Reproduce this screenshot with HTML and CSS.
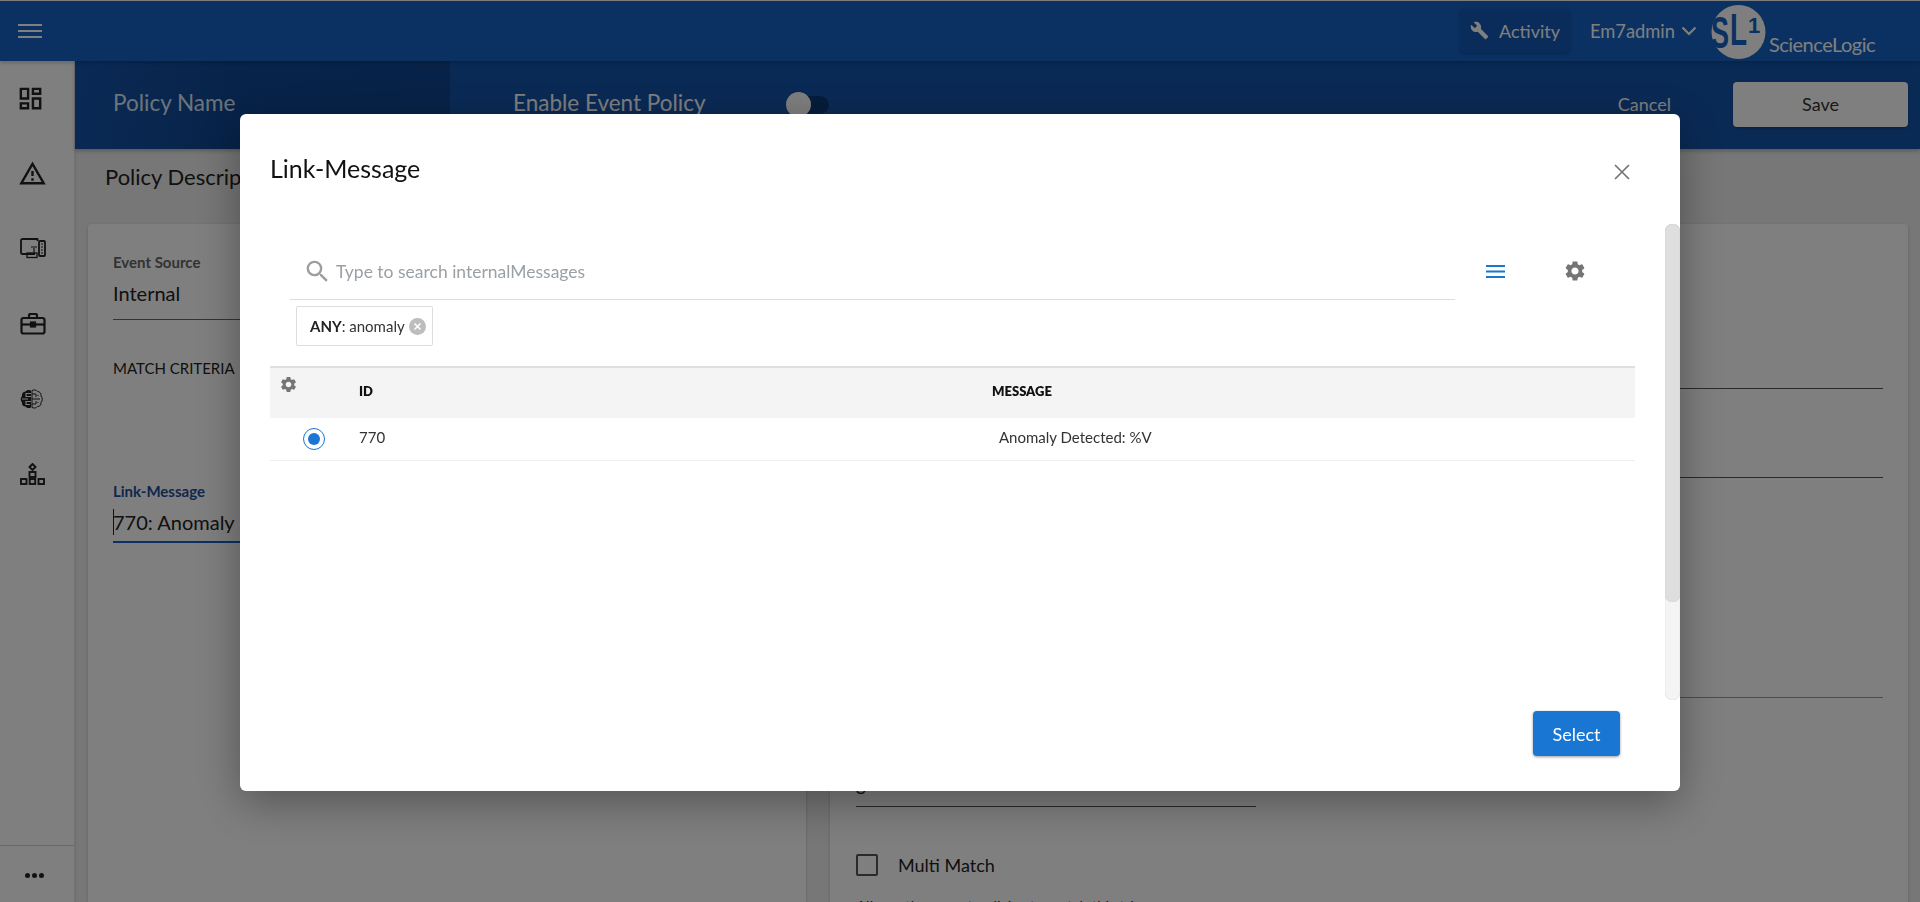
FILE: index.html
```html
<!DOCTYPE html>
<html lang="en">
<head>
<meta charset="utf-8">
<title>Policy Editor</title>
<link rel="stylesheet" href="styles.css">
</head>
<body>
<div class="app">
  <header class="topbar">
    <button class="icon-btn menu-btn" aria-label="Menu"><svg width="24" height="24" viewBox="0 0 24 24"><path d="M0 5h24v2H0zM0 11h24v2H0zM0 17h24v2H0z" fill="#fff"/></svg></button>
    <div class="topbar-right">
      <div class="activity">
        <svg width="19" height="19" viewBox="0 0 24 24"><path fill="#fff" d="M22.7 19l-9.1-9.1c.9-2.3.4-5-1.5-6.9-2-2-5-2.4-7.4-1.3L9 6 6 9 1.6 4.7C.4 7.1.9 10.1 2.9 12.1c1.9 1.9 4.6 2.4 6.9 1.5l9.1 9.1c.4.4 1 .4 1.4 0l2.3-2.3c.5-.4.5-1.1.1-1.4z"/></svg>
        <span>Activity</span>
      </div>
      <div class="user"><span>Em7admin</span>
        <svg width="16" height="10" viewBox="0 0 16 10"><path d="M1.5 1.5L8 8l6.500-6.500" fill="none" stroke="#fff" stroke-width="2.200"/></svg>
      </div>
      <div class="logo">
        <svg width="56" height="56" viewBox="0 0 56 56" class="logo-mark">
          <circle cx="27.500" cy="28" r="27" fill="#fff"/>
          <text x="0" y="44" textLength="18" lengthAdjust="spacingAndGlyphs" class="logo-s">S</text>
          <text x="19" y="41" textLength="17" lengthAdjust="spacingAndGlyphs" class="logo-l">L</text>
          <text x="37" y="29" class="logo-one">1</text>
        </svg>
        <span class="logo-text">ScienceLogic</span>
      </div>
    </div>
  </header>
  <div class="main">
    <nav class="sidebar">
      <a class="nav-item"><svg width="29" height="29" viewBox="0 0 24 24"><path class="ico" d="M19 5v2h-4V5h4M9 5v6H5V5h4m10 8v6h-4v-6h4M9 17v2H5v-2h4M21 3h-8v6h8V3zM11 3H3v10h8V3zm10 8h-8v10h8V11zm-10 4H3v6h8v-6z"/></svg></a>
      <a class="nav-item nav-item-warn"><svg width="29" height="29" viewBox="0 0 24 24"><path class="ico" d="M12 5.990L19.530 19H4.470L12 5.990M12 2L1 21h22L12 2zm1 14h-2v2h2v-2zm0-6h-2v4h2v-4z"/></svg></a>
      <a class="nav-item nav-item-in"><svg width="26" height="21" viewBox="0 0 26 21" fill="none" stroke="#222" stroke-width="1.800"><path d="M15 16H2.500A1.500 1.500 0 0 1 1 14.500V2.500A1.500 1.500 0 0 1 2.500 1H17.500V3"/><rect x="19" y="3" width="6" height="15" rx="1"/><path d="M21 6h2M21 9h2M21 12h2M21 15h2" stroke-width="1.200"/><rect x="7" y="15" width="10" height="4.500" stroke-width="1.300"/><path d="M14 15v-5M11 9h6" stroke-width="1.200"/></svg></a>
      <a class="nav-item nav-item-in"><svg width="26" height="22" viewBox="0 0 26 22" fill="none" stroke="#222" stroke-width="2.200"><path d="M9 5V2.500A1.500 1.500 0 0 1 10.500 1h5A1.500 1.500 0 0 1 17 2.500V5"/><rect x="1.500" y="5" width="23" height="15.500" rx="2"/><path d="M1.500 11.500h23"/><rect x="11" y="9.500" width="4" height="4" fill="#222"/></svg></a>
      <a class="nav-item nav-item-in"><svg width="23" height="20" viewBox="0 0 23 20"><path fill="#222" d="M11 1.500V18.500C8.500 19.500 6.500 19 5.500 17.500 3 17.500 1.500 15.500 2 13.500.3 12 .3 8.500 2 7 1.500 4.500 3 2.800 5.500 2.500 6.500 .8 9 .5 11 1.500z"/><path d="M12 1.500C14 .5 16.500.8 17.500 2.500 20 2.800 21.500 4.500 21 7 22.700 8.500 22.700 12 21 13.500 21.500 15.500 20 17.500 17.500 17.500 16.500 19 14.500 19.500 12 18.500zM12 5h4v3M12 10h8M12 15h4v-3M18 6v1M18 13v1" fill="none" stroke="#222" stroke-width="1"/><path d="M11 4.500H6v3h5M2 10h6M11 12.500H6v3h4" fill="none" stroke="#fff" stroke-width="1.100"/></svg></a>
      <a class="nav-item nav-item-in"><svg width="25" height="22" viewBox="0 0 25 22" fill="none" stroke="#222" stroke-width="1.900"><path d="M12.500 1l3 3-3 3-3-3z"/><rect x="9.500" y="9" width="6" height="5"/><rect x="1" y="16" width="5.500" height="5"/><rect x="9.700" y="16" width="5.500" height="5"/><rect x="18.500" y="16" width="5.500" height="5"/></svg></a>
      <div class="nav-more"><span class="dots"><i></i><i></i><i></i></span></div>
    </nav>
    <div class="content">
      <div class="subheader">
        <div class="policy-name">Policy Name</div>
        <div class="enable-label">Enable Event Policy</div>
        <div class="toggle"><span class="knob"></span></div>
        <div class="cancel">Cancel</div>
        <div class="save">Save</div>
      </div>
      <div class="desc-row">Policy Description</div>
      <div class="cards">
        <section class="card card-left">
          <div class="field-label">Event Source</div>
          <div class="field-value field-line">Internal</div>
          <div class="section-label">MATCH CRITERIA</div>
          <div class="field-label field-label-active">Link-Message</div>
          <div class="field-value field-line-active"><span class="caret"></span>770: Anomaly Detected: %V</div>
        </section>
        <section class="card card-right">
          <div class="line-one"></div>
          <div class="line-two"></div>
          <div class="line-three"></div>
          <div class="line-four"><span>g</span></div>
          <div class="check-row"><span class="checkbox"></span><span>Multi Match</span></div>
          <p class="hint">Allow other event policies to match this trigger</p>
        </section>
      </div>
    </div>
  </div>
</div>

<div class="backdrop"></div>
<div class="modal">
  <div class="modal-head">
    <h2 class="modal-title">Link-Message</h2>
    <svg class="close" width="16" height="16" viewBox="0 0 16 16"><path d="M1 1l14 14M15 1L1 15" stroke="#757575" stroke-width="1.700" fill="none"/></svg>
  </div>
  <div class="modal-body">
    <div class="toolbar">
      <div class="search">
        <svg width="29" height="29" viewBox="0 0 24 24"><path fill="#9e9e9e" d="M15.500 14h-.79l-.28-.27A6.471 6.471 0 0 0 16 9.500 6.500 6.500 0 1 0 9.500 16c1.610 0 3.090-.59 4.230-1.570l.27.28v.79l5 4.990L20.490 19l-4.990-5zm-6 0C7.010 14 5 11.990 5 9.500S7.010 5 9.500 5 14 7.010 14 9.500 11.990 14 9.500 14z"/></svg>
        <span class="placeholder">Type to search internalMessages</span>
      </div>
      <svg class="burger" width="19" height="13" viewBox="0 0 19 13"><path d="M0 0h19v2H0zM0 5.500h19v2H0zM0 11h19v2H0z" fill="#1976d2"/></svg>
      <svg class="gear" width="24" height="24" viewBox="0 0 24 24"><path fill="#757575" d="M19.140 12.940c.04-.3.060-.61.060-.94 0-.32-.02-.64-.07-.94l2.030-1.580c.18-.14.230-.41.120-.61l-1.920-3.320c-.12-.22-.37-.29-.59-.22l-2.390.960c-.5-.38-1.030-.7-1.620-.94l-.36-2.540c-.04-.24-.24-.41-.48-.41h-3.840c-.24 0-.43.170-.47.410l-.36 2.540c-.59.240-1.130.570-1.620.940l-2.390-.96c-.22-.08-.47 0-.59.220L2.740 8.870c-.12.210-.08.470.120.610l2.030 1.580c-.05.3-.09.630-.09.940s.02.640.07.940l-2.030 1.580c-.18.140-.23.410-.12.610l1.920 3.320c.12.220.37.290.59.220l2.390-.96c.5.380 1.030.7 1.620.940l.36 2.540c.05.240.24.410.48.410h3.840c.24 0 .44-.17.47-.41l.36-2.540c.59-.24 1.130-.56 1.620-.94l2.390.96c.22.080.47 0 .59-.22l1.920-3.320c.12-.22.070-.47-.12-.61l-2.010-1.580zM12 15.600c-1.980 0-3.600-1.620-3.600-3.600s1.620-3.600 3.600-3.600 3.600 1.620 3.600 3.600-1.620 3.600-3.600 3.600z"/></svg>
    </div>
    <div class="chip"><b>ANY</b>: anomaly
      <svg width="17" height="17" viewBox="0 0 17 17"><circle cx="8.500" cy="8.500" r="8.500" fill="#bdbdbd"/><path d="M5.500 5.500l6 6M11.500 5.500l-6 6" stroke="#fff" stroke-width="1.600"/></svg>
    </div>
    <div class="table">
      <div class="thead">
        <div class="col-gear"><svg width="19" height="19" viewBox="0 0 24 24"><path fill="#757575" d="M19.140 12.940c.04-.3.060-.61.060-.94 0-.32-.02-.64-.07-.94l2.030-1.580c.18-.14.230-.41.120-.61l-1.920-3.320c-.12-.22-.37-.29-.59-.22l-2.390.960c-.5-.38-1.030-.7-1.620-.94l-.36-2.540c-.04-.24-.24-.41-.48-.41h-3.840c-.24 0-.43.170-.47.410l-.36 2.540c-.59.240-1.130.570-1.620.940l-2.390-.96c-.22-.08-.47 0-.59.220L2.740 8.870c-.12.210-.08.470.120.610l2.030 1.580c-.05.3-.09.630-.09.940s.02.640.07.940l-2.030 1.580c-.18.140-.23.410-.12.610l1.920 3.320c.12.220.37.290.59.220l2.390-.96c.5.380 1.030.7 1.620.940l.36 2.540c.05.240.24.410.48.410h3.840c.24 0 .44-.17.47-.41l.36-2.540c.59-.24 1.130-.56 1.620-.94l2.390.96c.22.080.47 0 .59-.22l1.920-3.320c.12-.22.070-.47-.12-.61l-2.010-1.580zM12 15.600c-1.980 0-3.600-1.620-3.600-3.600s1.620-3.600 3.600-3.600 3.600 1.620 3.600 3.600-1.620 3.600-3.600 3.600z"/></svg></div>
        <div class="col-id">ID</div>
        <div class="col-msg">MESSAGE</div>
      </div>
      <div class="trow">
        <div class="col-radio"><span class="radio"></span></div>
        <div class="col-id">770</div>
        <div class="col-msg cell-msg">Anomaly Detected: %V</div>
      </div>
    </div>
    <div class="scrollbar"><div class="thumb"></div></div>
  </div>
  <div class="modal-foot"><button class="select-btn">Select</button></div>
</div>
</body>
</html>
```
FILE: styles.css
```css
* { box-sizing: border-box; }
html, body { margin: 0; height: 100%; overflow: hidden; }
body { font-family: Lato, "Noto Sans", sans-serif; color: #333; background: #fff; }

.app { display: flex; flex-direction: column; height: 902px; overflow: hidden; padding-top: 1px; }

.topbar { flex: 0 0 60px; display: flex; align-items: center; background: #1462c4; position: relative; z-index: 2; box-shadow: 0 2px 4px rgba(0,0,0,.2); }
.icon-btn { background: none; border: 0; padding: 0; display: flex; }
.menu-btn { margin-left: 18px; margin-top: -1px; }
.topbar-right { margin-left: auto; display: flex; align-items: center; color: #fff; height: 100%; padding-right: 45px; }
.activity { width: 110px; height: 44px; margin-top: -1px; border-radius: 4px; display: flex; align-items: center; gap: 10px; padding-left: 10px; background: #1259b5; box-shadow: 0 1px 3px rgba(0,0,0,.2); font-size: 18px; }
.user { display: flex; align-items: center; gap: 6px; margin-left: 20px; font-size: 18.300px; margin-top: -1px; }
.logo { display: flex; align-items: flex-end; margin-left: 14px; position: relative; height: 100%; }
.logo-mark { display: block; margin-top: 3px; margin-bottom: 1px; }
.logo-s, .logo-l, .logo-one { font-family: "Liberation Sans", sans-serif; font-weight: 700; fill: #1462c4; }
.logo-s { font-size: 44px; }
.logo-l { font-size: 44px; }
.logo-one { font-size: 22px; }
.logo-text { font-size: 20px; margin-left: 2px; margin-bottom: 5px; letter-spacing: -.5px; }

.main { flex: 1; display: flex; min-height: 0; }

.sidebar { flex: 0 0 75px; background: #fff; border-right: 1px solid #e4e4e4; display: flex; flex-direction: column; position: relative; box-shadow: 1px 0 2px rgba(0,0,0,.08); }
.nav-item { height: 75px; display: flex; align-items: center; padding-left: 16px; }
.nav-item-warn { padding-left: 18px; }
.nav-item-in { padding-left: 20px; }
.ico { fill: #222; }
.nav-more { margin-top: auto; height: 57px; border-top: 1px solid #d0d0d0; display: flex; align-items: flex-start; padding: 27px 0 0 25px; }
.dots { display: flex; gap: 2px; }
.dots i { width: 5px; height: 5px; border-radius: 50%; background: #222; }

.content { flex: 1; display: flex; flex-direction: column; background: #eee; min-width: 0; }
.subheader { flex: 0 0 88px; display: flex; align-items: center; background: #1454ac; color: #fff; font-size: 22.500px; box-shadow: 0 2px 4px rgba(0,0,0,.25); position: relative; }
.policy-name { width: 375px; height: 100%; padding-left: 38px; display: flex; align-items: center; background: linear-gradient(100deg, #1454ac, #0f4793 40%, #0f4490); color: #dbe6f5; padding-bottom: 5px; }
.enable-label { margin-left: 63px; padding-bottom: 6px; }
.toggle { width: 43px; height: 18px; margin-left: 80px; background: #0a3a78; border-radius: 9px; position: relative; }
.knob { position: absolute; left: 0; top: -4px; width: 25px; height: 25px; border-radius: 50%; background: #fff; }
.cancel { margin-left: auto; font-size: 18px; padding-bottom: 2px; }
.save { width: 175px; height: 45px; margin: -2px 12px 0 62px; background: #fff; color: #333; font-size: 18px; display: flex; align-items: center; justify-content: center; border-radius: 4px; box-shadow: 0 1px 3px rgba(0,0,0,.3); }

.desc-row { flex: 0 0 75px; padding: 14px 0 0 30px; font-size: 22px; color: #222; }

.cards { flex: 1; display: flex; gap: 24px; padding: 0 12px 0 13px; min-height: 0; }
.card { background: #fff; border-radius: 4px 4px 0 0; box-shadow: 0 1px 3px rgba(0,0,0,.2); }
.card-left { flex: 0 0 718px; padding: 29px 0 0 25px; }
.card-right { flex: 1; padding: 0 25px 0 26px; }
.field-label { font-size: 15px; font-weight: 700; color: #666; line-height: 18px; }
.field-label-active { color: #1d4f98; margin-top: 105px; }
.field-value { font-size: 20px; color: #222; line-height: 24px; margin-top: 8px; }
.field-line { height: 40px; margin-top: 9px; padding-top: 1px; border-bottom: 1px solid #666; }
.section-label { font-size: 15px; color: #222; margin-top: 39px; line-height: 18px; }
.field-line-active { height: 38px; margin-top: 5px; border-bottom: 2px solid #1462c4; padding-top: 5px; position: relative; }
.caret { position: absolute; left: 0; top: 4px; height: 26px; border-left: 1px solid #222; }

.line-one { height: 165px; border-bottom: 1px solid #555; }
.line-two { height: 89px; border-bottom: 1px solid #555; }
.line-three { height: 220px; border-bottom: 1px solid #999; }
.line-four { width: 400px; height: 109px; border-bottom: 1px solid #555; display: flex; align-items: flex-end; padding-bottom: 10px; font-size: 19px; line-height: 24px; color: #222; }
.check-row { display: flex; align-items: center; gap: 20px; margin-top: 47px; font-size: 18px; color: #222; }
.checkbox { width: 22px; height: 22px; border: 2px solid #555; border-radius: 2px; }
.hint { margin: 21px 0 0; font-size: 15px; color: #333; }

.backdrop { position: fixed; inset: 0; background: rgba(0,0,0,.5); z-index: 10; }
.modal { position: fixed; z-index: 11; left: 240px; top: 114px; width: 1440px; height: 677px; background: #fff; border-radius: 6px; box-shadow: 0 11px 45px rgba(0,0,0,.35); display: flex; flex-direction: column; }
.modal-head { flex: 0 0 110px; display: flex; justify-content: space-between; padding: 39px 50px 0 30px; }
.modal-title { margin: 0; font-size: 25px; font-weight: 400; color: #111; line-height: 30px; }
.close { margin-top: 11px; }
.modal-body { flex: 0 0 476px; padding: 0 45px 0 30px; position: relative; }
.toolbar { display: flex; align-items: flex-start; padding: 30px 0 0 20px; }
.search { width: 1165px; height: 46px; border-bottom: 1px solid #ddd; display: flex; align-items: flex-start; padding: 7px 0 0 13px; }
.search svg { margin-top: -4px; }
.placeholder { font-size: 17.500px; color: #9aa0a6; margin-left: 4px; line-height: 22px; }
.burger { margin: 11px 0 0 31px; }
.gear { margin: 5px 0 0 58px; }
.chip { display: inline-flex; align-items: center; gap: 4px; height: 40px; width: 137px; margin: 6px 0 0 26px; border: 1px solid #ddd; border-radius: 2px; padding-left: 13px; font-size: 15px; color: #333; }
.chip b { font-weight: 700; color: #222; margin-right: -4px; }
.table { margin-top: 20px; width: 1365px; border-top: 2px solid #e0e0e0; }
.thead { display: flex; height: 50px; background: #f4f4f4; align-items: center; font-size: 13px; font-weight: 800; color: #111; }
.thead .col-id, .thead .col-msg { padding-bottom: 4px; }
.trow { display: flex; height: 43px; align-items: center; border-bottom: 1px solid #eee; font-size: 15px; color: #333; }
.trow .col-id, .trow .cell-msg { padding-bottom: 5px; }
.col-gear { flex: 0 0 89px; padding: 0 0 17px 9px; display: flex; }
.col-radio { flex: 0 0 89px; padding-left: 33px; display: flex; }
.col-id { flex: 0 0 633px; }
.col-msg { flex: 1; }
.trow .cell-msg { padding-left: 7px; font-size: 15px; }
.radio { width: 22px; height: 22px; border: 1px solid #1976d2; border-radius: 50%; display: flex; align-items: center; justify-content: center; }
.radio::after { content: ""; width: 12px; height: 12px; background: #1976d2; border-radius: 50%; }
.scrollbar { position: absolute; right: 0; top: 0; width: 15px; height: 476px; background: #f4f4f4; border-radius: 7px; box-shadow: inset 0 0 1px #bbb; }
.thumb { height: 378px; background: #dedede; border-radius: 7px; box-shadow: inset 0 0 1px #bbb; }
.modal-foot { flex: 1; display: flex; justify-content: flex-end; padding: 11px 60px 0 0; }
.select-btn { width: 87px; height: 45px; background: #1976d2; color: #fff; border: 0; border-radius: 4px; font: 400 18px Lato, sans-serif; box-shadow: 0 1px 3px rgba(0,0,0,.4); }
```
